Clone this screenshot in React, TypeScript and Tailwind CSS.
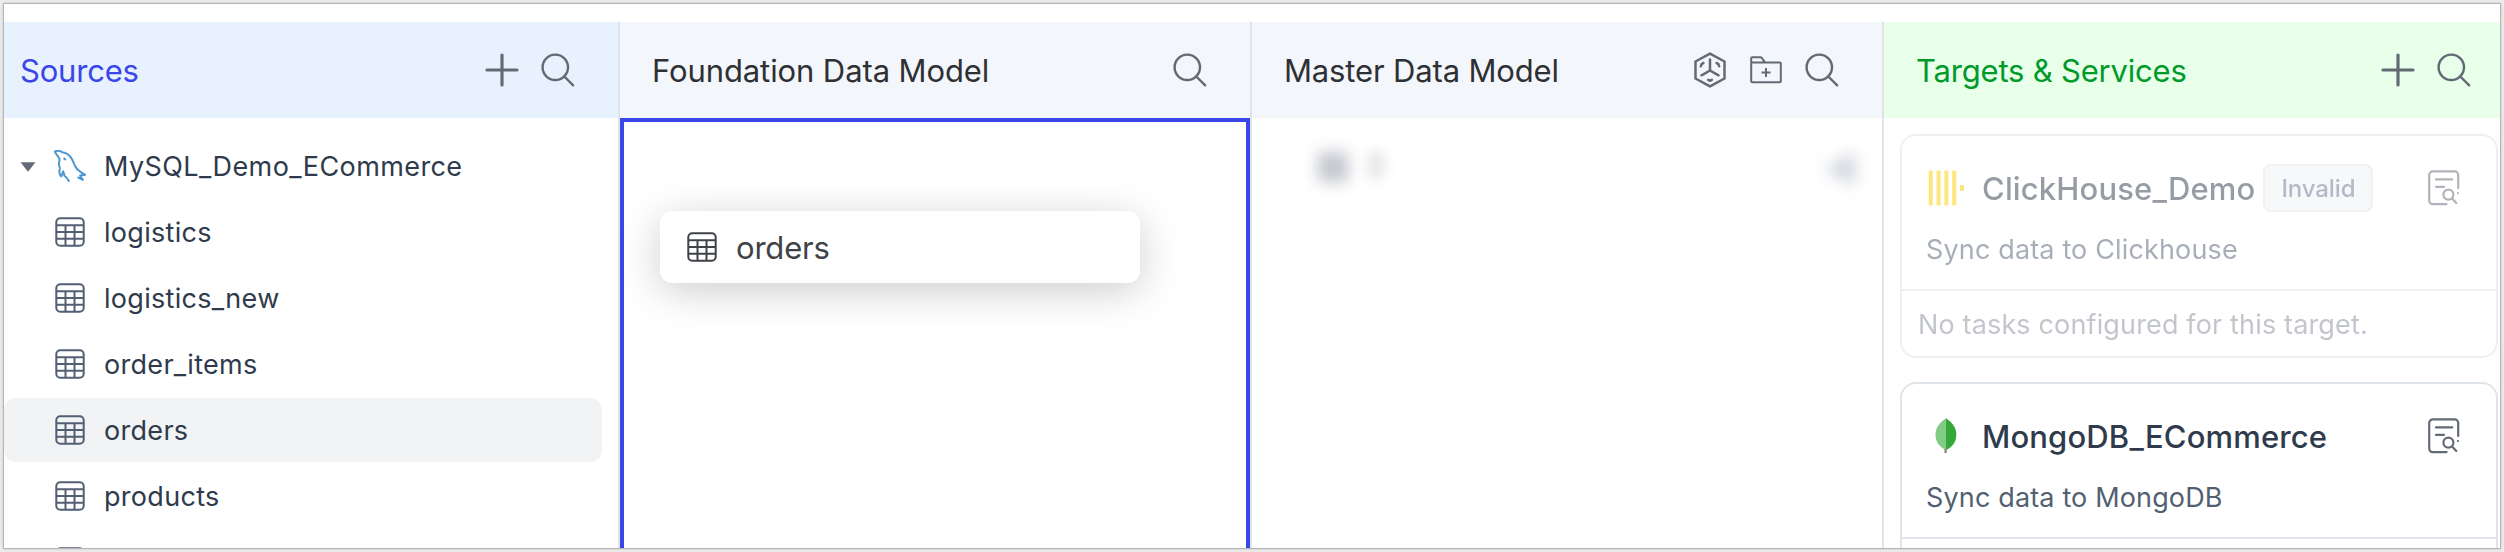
import React from "react";

type IconProps = { className?: string };

const PlusIcon = ({ className = "" }: IconProps) => (
  <svg viewBox="0 0 40 40" fill="none" stroke="#646a75" strokeWidth="3.2" strokeLinecap="round" className={`block size-10 shrink-0 ${className}`}>
    <path d="M20 5v30M5 20h30" />
  </svg>
);

const SearchIcon = ({ className = "" }: IconProps) => (
  <svg viewBox="0 0 40 40" fill="none" stroke="#646a75" strokeWidth="2.4" strokeLinecap="round" className={`block size-10 shrink-0 ${className}`}>
    <circle cx="17.300" cy="17.300" r="12.700" />
    <path d="M26.300 26.500 35.200 35.300" />
  </svg>
);

const CubeIcon = () => (
  <svg viewBox="0 0 40 40" fill="none" stroke="#646a75" strokeWidth="2.5" strokeLinejoin="round" strokeLinecap="round" className="block size-10 shrink-0">
    <path d="M20 3.600 34.500 11.500V28.500L20 36.400 5.500 28.500V11.500Z" />
    <path d="M20 9.500V20.500L11.500 25.300M20 20.500l8.500 4.800M10.800 16.300c.2-1.600 1.200-2.800 2.600-3.300M29.200 16.300c-.2-1.600-1.200-2.800-2.600-3.300M18.200 29.800l1.800 1 1.800-1" />
  </svg>
);

const FolderPlusIcon = ({ className = "" }: IconProps) => (
  <svg viewBox="0 0 40 40" fill="none" stroke="#646a75" strokeWidth="2" strokeLinejoin="round" className={`block size-10 shrink-0 ${className}`}>
    <path d="M5.200 12.400V8.200Q5.200 7.200 6.200 7.200H14.500Q15.200 7.200 15.700 7.800L19 12.400M5.200 12.400H33.800Q34.800 12.400 34.800 13.400V31.200Q34.800 32.200 33.800 32.200H6.200Q5.200 32.200 5.200 31.200ZM20 18v9M15.500 22.500h9" />
  </svg>
);

const TableIcon = ({ className = "" }: IconProps) => (
  <svg viewBox="0 0 32 32" fill="none" stroke="currentColor" strokeWidth="2" className={`block size-8 shrink-0 ${className}`}>
    <rect x="2.300" y="2.300" width="27.400" height="27.400" rx="4" />
    <path d="M2.300 9.200h27.400M2.300 16h27.400M2.300 22.800h27.400M11.500 9.200v20.500M20.500 9.200v20.500" />
  </svg>
);

const DolphinIcon = () => (
  <svg viewBox="0 0 32 32" fill="none" stroke="#4f97cf" strokeWidth="2" strokeLinejoin="round" strokeLinecap="round" className="block size-8 shrink-0">
    <path d="M.9 1.600C3 .4 6 .6 8.200 2.300c3.300.3 6.200 2.200 8.300 4.700 2.200 2.700 3 5.500 4.300 8.500 1.200 2.800 3 4.600 5.200 6 1.200 1.300 3.200 2.300 5.200 3.300l-5 .7 2.600 4.300-4.500-2.300" />
    <path d="M.9 1.600c.8 2.800 3.200 4.200 4.300 6.700 1 2.200-.8 4.200-.2 6.700.5 1.500 1 2.500.8 4-.8 2.300-.6 5 1.400 7.500 1.300-1.200.8-3.700 2-5.200l1.300 4.500c2.500 1.200 3 3 4.300 5.200M10.300 8.600l1 .8" />
  </svg>
);

const LogIcon = ({ className = "" }: IconProps) => (
  <svg viewBox="0 0 32 36" fill="none" stroke="#646a75" strokeWidth="2.200" strokeLinecap="round" className={`block h-9 w-8 shrink-0 ${className}`}>
    <path d="M18.500 34.200H4.800A3.600 3.600 0 0 1 1.200 30.600V5A3.600 3.600 0 0 1 4.800 1.400H26.600A3.600 3.600 0 0 1 30.200 5V18M8 9.400H24.200M8 16.800H16" />
    <circle cx="20.400" cy="24.600" r="5" />
    <path d="M24.300 28.700 28.300 32.900M29.900 23h.1" />
  </svg>
);

const ClickHouseIcon = () => (
  <svg viewBox="0 0 36 36" fill="#ffcc00" className="block size-9 shrink-0">
    <path d="M.7.5h4v35h-4zM8.600.5h4v35h-4zM16.400.5h4v35h-4zM24.200.5h4v35h-4zM32 15h4v6h-4z" />
  </svg>
);

const MongoIcon = () => (
  <svg viewBox="0 0 36 36" className="block size-9 shrink-0">
    <path fill="#82cb86" d="M18 .3C12.500 4 7.500 9 7.500 16.500 7.500 23.500 11 29 18 32z" />
    <path fill="#34a939" d="M18 .3C23.500 4 28.300 9 28.300 16.500 28.300 23.500 25 29 18 32z" />
    <path fill="#8f8a80" d="M16.400 31h2.400v4h-2.400z" />
  </svg>
);

const tables = ["logistics", "logistics_new", "order_items", "orders", "products", ""];

type TargetProps = { icon: React.ReactNode; name: string; note: string; invalid?: boolean; footer?: string };

const TargetCard = ({ icon, name, note, invalid, footer }: TargetProps) => (
  <article className={invalid ? "h-56 w-[598px] rounded-2xl border-2 border-[#dfe1e6] opacity-50" : "h-56 w-[598px] rounded-2xl border-2 border-[#dfe3ea]"}>
    <div className="flex h-[155px] flex-col border-b-2 border-inherit pt-7 pr-9 pl-[26px]">
      <div className="flex h-12 items-center">
        {icon}
        <h3 className="ml-[18px] pt-0.5 text-[31px] font-medium tracking-[0.15px] whitespace-nowrap text-[#2f3b4c]">{name}</h3>
        {invalid && (
          <span className="ml-2 flex h-12 w-[110px] items-center justify-center rounded-lg border-2 border-[#e1e4e9] bg-[#f0f2f6] pt-0.5 text-[24px] font-medium tracking-[-0.1px] text-[#6a7690]">
            Invalid
          </span>
        )}
        <LogIcon className="ml-auto" />
      </div>
      <p className="mt-[18px] -ml-0.5 text-[27px] leading-10 tracking-[0.15px] whitespace-nowrap text-[#535f73]">{note}</p>
    </div>
    {footer && <p className="pt-px pl-4 text-[27px] leading-[66px] tracking-[0.15px] text-[#878d9b]">{footer}</p>}
  </article>
);

export default function App() {
  return (
    <div className="h-[552px] w-[2504px] overflow-hidden bg-[#ededed] p-1 font-['Inter','Liberation_Sans',sans-serif]">
      <div className="flex h-[544px] w-[2496px] overflow-hidden bg-white pt-[18px] shadow-[0_0_0_1px_#b5b5b5,0_0_3px_1px_#c4c4c4]">
        <section className="w-[616px] shrink-0 border-r-2 border-[#e0e3ea]">
          <header className="flex h-24 items-center bg-[#e8f2ff] pr-10 pl-4">
            <h2 className="pt-0.5 text-[31px] tracking-[-0.2px] text-[#3b46e8]">Sources</h2>
            <PlusIcon className="ml-auto" />
            <SearchIcon className="ml-4" />
          </header>
          <div className="flex flex-col gap-0.5 pt-4">
            <div className="flex h-16 items-center pl-4">
              <svg viewBox="0 0 16 10" className="mt-0.5 block h-2.5 w-4">
                <path fill="#646a75" d="M.5.300h15L8 9.700z" />
              </svg>
              <span className="ml-[18px]">
                <DolphinIcon />
              </span>
              <span className="ml-[18px] pt-0.5 text-[27px] tracking-[0.4px] text-[#2f3b4c]">MySQL_Demo_ECommerce</span>
            </div>
            {tables.map((name) => (
              <div
                key={name}
                className={`flex h-16 w-[598px] shrink-0 items-center rounded-xl pl-[50px] ${name === "orders" ? "bg-[#f2f3f5]" : ""}`}
              >
                <TableIcon className="text-[#535f73]" />
                <span className="ml-[18px] pt-0.5 text-[27px] tracking-[0.3px] text-[#2f3b4c]">{name}</span>
              </div>
            ))}
          </div>
        </section>

        <section className="flex w-[632px] shrink-0 flex-col border-r-2 border-[#e0e3ea]">
          <header className="flex h-24 shrink-0 items-center bg-[#f3f6fb] pr-10 pl-8">
            <h2 className="pt-0.5 text-[31px] tracking-[-0.1px] text-[#2e3033]">Foundation Data Model</h2>
            <SearchIcon className="ml-auto" />
          </header>
          <div className="flex-1 border-4 border-b-0 border-[#3b46e8] px-9 pt-[89px]">
            <div className="flex h-[72px] w-[480px] items-center rounded-xl bg-white pl-[26px] shadow-[0_8px_40px_rgba(0,0,0,0.2)]">
              <TableIcon className="text-[#3f4347]" />
              <span className="ml-[18px] pt-0.5 text-[31px] tracking-[-0.2px] text-[#3f4347]">orders</span>
            </div>
          </div>
        </section>

        <section className="w-[632px] shrink-0 border-r-2 border-[#e0e3ea]">
          <header className="flex h-24 items-center gap-4 bg-[#f3f6fb] pr-10 pl-8">
            <h2 className="mr-auto pt-0.5 text-[31px] tracking-[-0.15px] text-[#2e3033]">Master Data Model</h2>
            <CubeIcon />
            <FolderPlusIcon />
            <SearchIcon />
          </header>
          <div className="flex items-start pt-8 pr-[23px] pl-[66px]">
            <span className="mt-0.5 size-[30px] bg-[#c3c5cd] blur-[8px]" />
            <span className="mt-0.5 ml-[22px] h-[26px] w-3 bg-[#dcdedf] blur-[7px]" />
            <svg viewBox="0 0 36 34" className="mt-0.5 ml-auto block h-[34px] w-9 overflow-visible blur-[8px]">
              <path fill="#d0d3dc" d="M1 17 32 0v34z" />
            </svg>
          </div>
        </section>

        <section className="w-[616px] shrink-0">
          <header className="flex h-24 items-center gap-4 bg-[#e8ffea] pr-[26px] pl-8">
            <h2 className="mr-auto pt-0.5 text-[31px] tracking-[-0.2px] text-[#009a29]">Targets &amp; Services</h2>
            <PlusIcon />
            <SearchIcon />
          </header>
          <div className="flex flex-col gap-6 pt-4 pl-4">
            <TargetCard
              icon={<ClickHouseIcon />}
              name="ClickHouse_Demo"
              note="Sync data to Clickhouse"
              footer="No tasks configured for this target."
              invalid
            />
            <TargetCard icon={<MongoIcon />} name="MongoDB_ECommerce" note="Sync data to MongoDB" />
          </div>
        </section>
      </div>
    </div>
  );
}
